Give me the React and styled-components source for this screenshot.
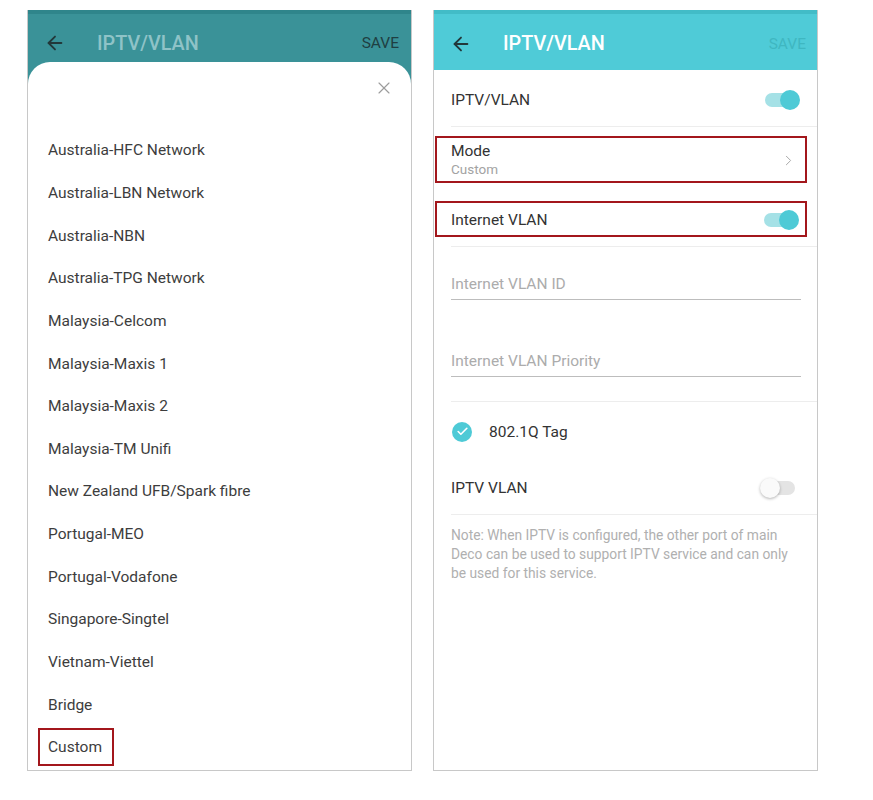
import React from "react";
import styled, { createGlobalStyle } from "styled-components";
import { ArrowLeft, X, ChevronRight, Check } from "lucide-react";

const regions = [
  "Australia-HFC Network",
  "Australia-LBN Network",
  "Australia-NBN",
  "Australia-TPG Network",
  "Malaysia-Celcom",
  "Malaysia-Maxis 1",
  "Malaysia-Maxis 2",
  "Malaysia-TM Unifi",
  "New Zealand UFB/Spark fibre",
  "Portugal-MEO",
  "Portugal-Vodafone",
  "Singapore-Singtel",
  "Vietnam-Viettel",
  "Bridge",
  "Custom",
];

const App = () => {
  return (
    <>
      <GlobalStyle />
      <Page>
        <Phone $dim>
          <StatusBar $dim />
          <Header $dim>
            <BackIcon size={22} strokeWidth={2} />
            <Title $dim>IPTV/VLAN</Title>
            <Save $dim>SAVE</Save>
          </Header>
          <Sheet>
            <CloseRow>
              <X size={20} strokeWidth={1.4} color="#9c9c9c" />
            </CloseRow>
            {regions.map((r) => (
              <ListItem key={r}>
                <ItemLabel $marked={r === "Custom"}>{r}</ItemLabel>
              </ListItem>
            ))}
          </Sheet>
        </Phone>

        <Phone>
          <StatusBar />
          <Header>
            <BackIcon size={22} strokeWidth={2} />
            <Title>IPTV/VLAN</Title>
            <Save>SAVE</Save>
          </Header>
          <Content>
            <Row>
              <RowText>IPTV/VLAN</RowText>
              <Toggle $on />
            </Row>
            <Divider />
            <Marked $top={9}>
              <ModeText>
                <RowText>Mode</RowText>
                <SubText>Custom</SubText>
              </ModeText>
              <ChevronRight size={17} strokeWidth={1.4} color="#a8a8a8" />
            </Marked>
            <Marked $top={18} $height={36} $right={7}>
              <RowText>Internet VLAN</RowText>
              <Toggle $on />
            </Marked>
            <Divider $top={9} />
            <Field $top={27}>Internet VLAN ID</Field>
            <Field $top={51}>Internet VLAN Priority</Field>
            <Divider $top={24} />
            <Row>
              <CheckCircle>
                <Check size={13} strokeWidth={3} color="#fff" />
              </CheckCircle>
              <RowText $grow>802.1Q Tag</RowText>
            </Row>
            <Row>
              <RowText>IPTV VLAN</RowText>
              <Toggle />
            </Row>
            <Divider />
            <Note>
              Note: When IPTV is configured, the other port of main Deco can be
              used to support IPTV service and can only be used for this service.
            </Note>
          </Content>
        </Phone>
      </Page>
    </>
  );
};

const Toggle = ({ $on }) => (
  <Track $on={$on}>
    <Thumb $on={$on} />
  </Track>
);

// styled components

const GlobalStyle = createGlobalStyle`
  body {
    margin: 0;
    background: #fff;
    font-family: Roboto, "Noto Sans", sans-serif;
  }
`;

const Page = styled.div`
  display: flex;
  gap: 21px;
  padding: 10px 0 0 27px;
`;

const Phone = styled.div`
  width: 385px;
  height: 761px;
  box-sizing: border-box;
  border: 1px solid #c8c8c8;
  border-top: none;
  display: flex;
  flex-direction: column;
  overflow: hidden;
  background: ${(p) => (p.$dim ? "#3a9298" : "#fff")};
`;

const StatusBar = styled.div`
  height: 4px;
  background: ${(p) => (p.$dim ? "#2f858b" : "#42bcc7")};
`;

const Header = styled.div`
  height: ${(p) => (p.$dim ? "48px" : "56px")};
  box-sizing: border-box;
  padding: ${(p) => (p.$dim ? "10px 12px 0 16px" : "3px 11px 0 16px")};
  display: flex;
  align-items: center;
  background: ${(p) => (p.$dim ? "#3a9298" : "#4fcbd7")};
  color: #22383a;
`;

const BackIcon = styled(ArrowLeft)`
  flex-shrink: 0;
`;

const Title = styled.div`
  flex: 1;
  margin-left: 31px;
  font-size: 19.8px;
  font-weight: 500;
  color: ${(p) => (p.$dim ? "#8fc3c7" : "#fff")};
`;

const Save = styled.div`
  font-size: 15.5px;
  color: ${(p) => (p.$dim ? "#1f3f42" : "#3fb7c1")};
`;

const Sheet = styled.div`
  flex: 1;
  background: #fff;
  border-radius: 22px 22px 0 0;
`;

const CloseRow = styled.div`
  height: 67px;
  box-sizing: border-box;
  padding: 16px 17px 0 0;
  display: flex;
  justify-content: flex-end;
  align-items: flex-start;
`;

const ListItem = styled.div`
  height: 42.65px;
  display: flex;
  align-items: center;
  padding-left: 20px;
`;

const ItemLabel = styled.span`
  font-size: 15.5px;
  color: #3d3d3d;
  ${(p) =>
    p.$marked &&
    `
    display: inline-flex;
    align-items: center;
    height: 38px;
    box-sizing: border-box;
    margin-left: -10px;
    padding: 0 10px 0 8px;
    border: 2px solid #a3171c;
  `}
`;

const Content = styled.div`
  display: flex;
  flex-direction: column;
`;

const Row = styled.div`
  height: 56px;
  box-sizing: border-box;
  padding: 3px 18px 0 17px;
  display: flex;
  align-items: center;
  justify-content: space-between;
`;

const RowText = styled.div`
  flex: ${(p) => (p.$grow ? 1 : "none")};
  font-size: 15.5px;
  line-height: 18px;
  color: #333;
`;

const Divider = styled.div`
  height: 1px;
  margin: ${(p) => p.$top || 0}px 0 0 17px;
  background: #ededed;
`;

const Marked = styled.div`
  height: ${(p) => p.$height || 47}px;
  box-sizing: border-box;
  margin: ${(p) => p.$top}px 10px 0 1px;
  padding: 2px ${(p) => p.$right || 8}px 0 14px;
  border: 2px solid #a3171c;
  display: flex;
  align-items: center;
  justify-content: space-between;
`;

const ModeText = styled.div`
  display: flex;
  flex-direction: column;
`;

const SubText = styled.div`
  font-size: 13.5px;
  line-height: 19px;
  color: #a3a3a3;
`;

const Track = styled.div`
  position: relative;
  width: 34px;
  height: 14px;
  border-radius: 7px;
  background: ${(p) => (p.$on ? "#a5e1e6" : "#e4e4e4")};
  margin-right: ${(p) => (p.$on ? "0" : "4px")};
`;

const Thumb = styled.div`
  position: absolute;
  top: -3px;
  left: ${(p) => (p.$on ? "15px" : "-1px")};
  width: 20px;
  height: 20px;
  border-radius: 50%;
  background: ${(p) => (p.$on ? "#4ecad6" : "#fafafa")};
  box-shadow: ${(p) => (p.$on ? "none" : "0 1px 3px rgba(0,0,0,0.3)")};
`;

const Field = styled.div`
  margin: ${(p) => p.$top}px 16px 0 17px;
  padding-bottom: 5px;
  border-bottom: 1px solid #bdbdbd;
  font-size: 15.5px;
  line-height: 20px;
  color: #acacac;
`;

const CheckCircle = styled.div`
  width: 20px;
  height: 20px;
  margin: 0 17px 0 1px;
  border-radius: 50%;
  background: #4ecad6;
  display: flex;
  align-items: center;
  justify-content: center;
`;

const Note = styled.div`
  padding: 11px 18px 0 17px;
  font-size: 13.8px;
  line-height: 19px;
  color: #b0b0b0;
`;

export default App;
